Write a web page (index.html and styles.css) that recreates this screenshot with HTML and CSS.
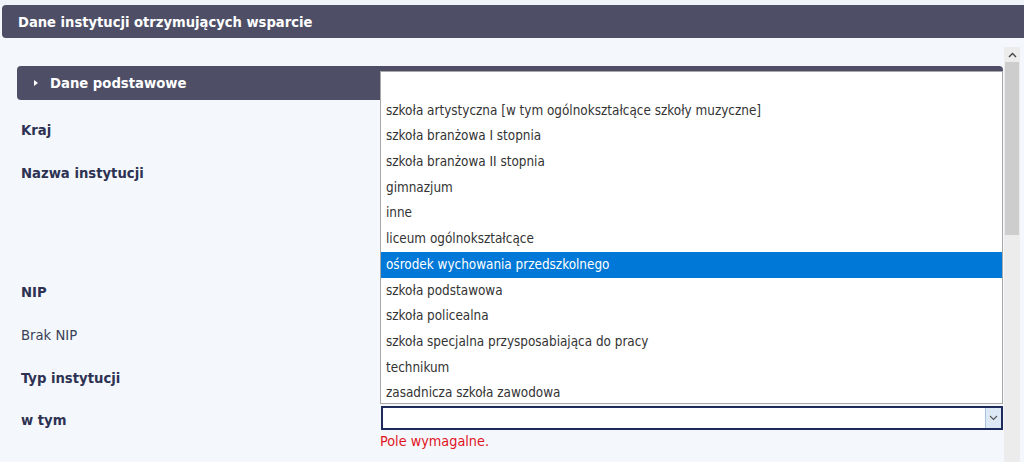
FILE: index.html
```html
<!DOCTYPE html>
<html lang="pl">
<head>
<meta charset="utf-8">
<title>Dane instytucji otrzymujących wsparcie</title>
<link rel="stylesheet" href="styles.css">
</head>
<body>
<div class="page">
  <div class="topstrip"></div>
  <div class="header">Dane instytucji otrzymujących wsparcie</div>
  <div class="main">
    <div class="content">
      <div class="panel"><span class="tri"></span>Dane podstawowe</div>
      <div class="form">
        <div class="row r1"><div class="label">Kraj</div><div class="field"></div></div>
        <div class="row r2"><div class="label">Nazwa instytucji</div><div class="field"></div></div>
        <div class="row r1"><div class="label">NIP</div><div class="field"></div></div>
        <div class="row r1"><div class="label normal">Brak NIP</div><div class="field"></div></div>
        <div class="row r1"><div class="label">Typ instytucji</div><div class="field"></div></div>
        <div class="row r3"><div class="label">w tym</div>
          <div class="field">
            <div class="select"><span class="arrow"><svg width="9" height="6" viewBox="0 0 9 6"><path d="M1 1l3.5 3.5L8 1" fill="none" stroke="#555" stroke-width="1.1"/></svg></span></div>
            <div class="error">Pole wymagalne.</div>
          </div>
        </div>
      </div>
      <ul class="dropdown">
        <li></li>
        <li>szkoła artystyczna [w tym ogólnokształcące szkoły muzyczne]</li>
        <li>szkoła branżowa I stopnia</li>
        <li>szkoła branżowa II stopnia</li>
        <li>gimnazjum</li>
        <li>inne</li>
        <li>liceum ogólnokształcące</li>
        <li class="sel">ośrodek wychowania przedszkolnego</li>
        <li>szkoła podstawowa</li>
        <li>szkoła policealna</li>
        <li>szkoła specjalna przysposabiająca do pracy</li>
        <li>technikum</li>
        <li>zasadnicza szkoła zawodowa</li>
      </ul>
    </div>
    <div class="scrollbar">
      <div class="up"><svg width="9" height="6" viewBox="0 0 9 6"><path d="M1 5l3.5-3.5L8 5" fill="none" stroke="#444" stroke-width="1.4"/></svg></div>
      <div class="thumb"></div>
    </div>
  </div>
</div>
</body>
</html>
```
FILE: styles.css
```css
html, body {
  margin: 0;
  padding: 0;
  height: 100%;
  overflow: hidden;
}
body {
  background: #f4f8fc;
  font-family: "DejaVu Sans Condensed", "DejaVu Sans", sans-serif;
}
.page {
  width: 1024px;
  height: 462px;
  display: flex;
  flex-direction: column;
  overflow: hidden;
}
.topstrip {
  flex-shrink: 0;
  height: 5px;
  background: #edf3f8;
}
.header {
  flex-shrink: 0;
  margin-left: 2px;
  height: 33px;
  background: #4e4f67;
  border-radius: 4px 0 0 4px;
  color: #fff;
  font-weight: bold;
  font-size: 14.6px;
  line-height: 33px;
  padding-left: 16px;
}
.main {
  flex: 1;
  min-height: 0;
  display: flex;
}
.content {
  position: relative;
  width: 1004px;
  padding-top: 28px;
}
.panel {
  margin-left: 17px;
  width: 986px;
  height: 34px;
  background: #4e4f67;
  border-radius: 4px;
  color: #fff;
  font-weight: bold;
  font-size: 14.7px;
  line-height: 34px;
  display: flex;
  align-items: center;
  box-sizing: border-box;
  padding-left: 33px;
}
.tri {
  width: 0;
  height: 0;
  border-left: 4px solid #fff;
  border-top: 3.5px solid transparent;
  border-bottom: 3.5px solid transparent;
  margin-left: -16px;
  margin-right: 12px;
}
.form {
  margin-top: 20px;
  margin-left: 21px;
}
.row {
  display: grid;
  grid-template-columns: 360px 1fr;
}
.r1 { height: 43px; }
.r2 { height: 119px; }
.r3 { height: 60px; margin-top: -1px; }
.label {
  font-size: 14.7px;
  font-weight: bold;
  color: #2d3253;
  line-height: 20px;
}
.label.normal {
  font-weight: normal;
  color: #3b3f58;
}
.select {
  margin-top: -4px;
  width: 622px;
  height: 24px;
  box-sizing: border-box;
  border: 2px solid #1f2a5c;
  background: #fff;
  display: flex;
  justify-content: flex-end;
}
.arrow {
  width: 15px;
  height: 20px;
  background: #dde9f5;
  border-left: 1px solid #a9c4df;
  display: flex;
  align-items: center;
  justify-content: center;
}
.error {
  color: #e1141e;
  font-size: 14.3px;
  line-height: 20px;
  margin-top: 1px;
  margin-left: -1px;
}
.dropdown {
  position: absolute;
  left: 380px;
  top: 33px;
  width: 623px;
  height: 333px;
  margin: 0;
  padding: 0;
  list-style: none;
  background: #fff;
  border: 1px solid #a8a8a8;
  box-sizing: border-box;
  overflow: hidden;
}
.dropdown li {
  height: 25.7px;
  line-height: 25.7px;
  padding-left: 5px;
  font-size: 13.4px;
  color: #333;
  white-space: nowrap;
}
.dropdown li.sel {
  background: #0078d7;
  color: #fff;
}
.scrollbar {
  width: 16px;
  margin-top: 9px;
  background: #ececec;
  display: flex;
  flex-direction: column;
}
.up {
  flex-shrink: 0;
  height: 15px;
  display: flex;
  align-items: center;
  justify-content: center;
}
.thumb {
  flex-shrink: 0;
  margin: 0 1px;
  height: 173px;
  background: #cdcdcd;
}
```
